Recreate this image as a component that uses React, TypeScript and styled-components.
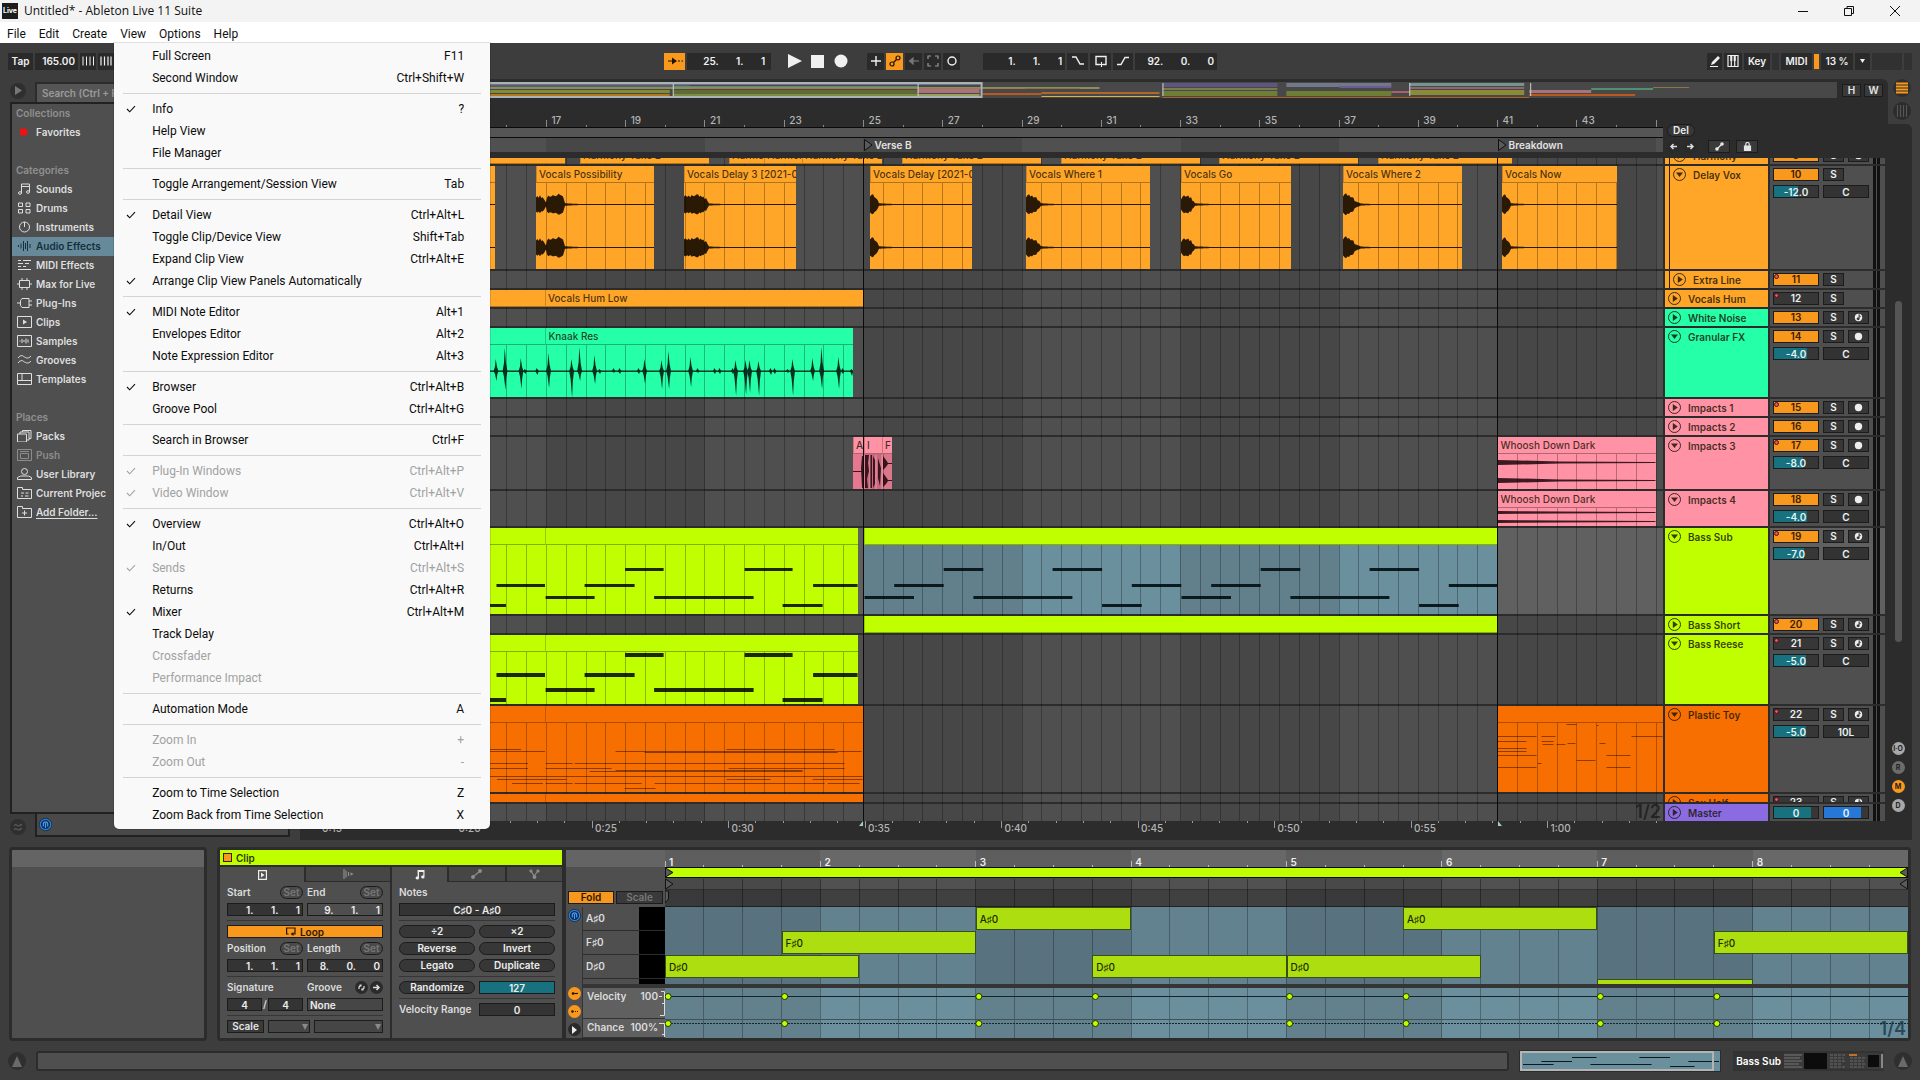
import React from "react";
import styled, { createGlobalStyle, css } from "styled-components";

const c = {
  chrome: "#3d3d3d",
  well: "#2c2c2c",
  panel: "#4f4f4f",
  field: "#2a2a2a",
  line: "#1c1c1c",
  text: "#dcdcdc",
  dim: "#8f8f8f",
  orange: "#ffa629",
  on: "#f8981d",
  lime: "#bfff00",
  note: "#addf10",
  mint: "#24ffa8",
  pink: "#ff92a5",
  toy: "#f76f00",
  purple: "#8a6be2",
  teal: "#17717f",
  steel: "#6a8f9d",
};

const Global = createGlobalStyle`
  *, *::before, *::after { box-sizing: border-box; }
  body { margin: 0; background: ${c.chrome}; }
  button, input, select { font: inherit; color: inherit; margin: 0; padding: 0; border: 0; border-radius: 0; background: none; }
  ul { list-style: none; margin: 0; padding: 0; }
  h2 { margin: 0; font: inherit; }
  svg { display: block; }
`;

const Page = styled.div`
  min-height: 100vh;
  display: flex;
  flex-direction: column;
  background: ${c.chrome};
  color: ${c.text};
  font: 500 10px/14px Inter, "Liberation Sans", sans-serif;
`;

/* ---------- window chrome ---------- */

const TitleBar = styled.header`
  display: flex;
  align-items: center;
  height: 22px;
  padding: 0 17px 0 2px;
  gap: 6px;
  background: #f3f3f3;
  color: #111;
  font: 400 12px/20px "Open Sans", "Noto Sans", sans-serif;
`;
const AppBadge = styled.span`
  display: grid;
  place-items: center;
  width: 16px;
  height: 16px;
  background: #1d1d1d;
  color: #fff;
  font: 700 7px/8px Inter, sans-serif;
`;
const WindowButtons = styled.div`
  display: flex;
  gap: 30px;
  margin-left: auto;
`;
const WinButton = styled.button`
  width: 16px;
  height: 16px;
  display: grid;
  place-items: center;
`;
const MenuBar = styled.nav`
  display: flex;
  height: 21px;
  padding-left: 1px;
  background: #fff;
  color: #111;
  font: 400 12px/22px Roboto, "Noto Sans", sans-serif;
`;
const MenuSlot = styled.div`
  position: relative;
`;
const MenuTitle = styled.button`
  padding: 1px 7px 0 6px !important;
  height: 21px;
`;
const Popup = styled.div`
  position: absolute;
  z-index: 20;
  top: 21px;
  left: 0;
  width: 376px;
  padding: 2px 0 3px;
  background: #f9f9f9;
  border-radius: 0 0 5px 5px;
  box-shadow: 0 0 0 1px rgba(0, 0, 0, 0.12);
`;
const MenuRow = styled.button<{ $off?: boolean }>`
  display: grid;
  grid-template-columns: 38px 1fr auto;
  align-items: center;
  width: 100%;
  height: 22px;
  padding: 0 26px 0 0 !important;
  line-height: 22px;
  text-align: left;
  color: ${(p) => (p.$off ? "#a2a2a2" : "#0c0c0c")} !important;
  > svg { margin-left: 12px; }
`;
const MenuLine = styled.hr`
  margin: 4px 9px;
  border: 0;
  height: 1px;
  background: #d4d4d4;
`;

type Entry = [string, string?, string?] | null;
const viewMenu: Entry[] = [
  ["Full Screen", "F11"], ["Second Window", "Ctrl+Shift+W"], null,
  ["Info", "?", "c"], ["Help View"], ["File Manager"], null,
  ["Toggle Arrangement/Session View", "Tab"], null,
  ["Detail View", "Ctrl+Alt+L", "c"], ["Toggle Clip/Device View", "Shift+Tab"],
  ["Expand Clip View", "Ctrl+Alt+E"], ["Arrange Clip View Panels Automatically", "", "c"], null,
  ["MIDI Note Editor", "Alt+1", "c"], ["Envelopes Editor", "Alt+2"], ["Note Expression Editor", "Alt+3"], null,
  ["Browser", "Ctrl+Alt+B", "c"], ["Groove Pool", "Ctrl+Alt+G"], null,
  ["Search in Browser", "Ctrl+F"], null,
  ["Plug-In Windows", "Ctrl+Alt+P", "cd"], ["Video Window", "Ctrl+Alt+V", "cd"], null,
  ["Overview", "Ctrl+Alt+O", "c"], ["In/Out", "Ctrl+Alt+I"], ["Sends", "Ctrl+Alt+S", "cd"],
  ["Returns", "Ctrl+Alt+R"], ["Mixer", "Ctrl+Alt+M", "c"], ["Track Delay"],
  ["Crossfader", "", "d"], ["Performance Impact", "", "d"], null,
  ["Automation Mode", "A"], null,
  ["Zoom In", "+", "d"], ["Zoom Out", "-", "d"], null,
  ["Zoom to Time Selection", "Z"], ["Zoom Back from Time Selection", "X"],
];

function ViewMenu() {
  return (
    <Popup role="menu" aria-label="View">
      {viewMenu.map((e, i) =>
        e === null ? (
          <MenuLine key={i} />
        ) : (
          <MenuRow key={i} role="menuitem" $off={e[2]?.includes("d")}>
            {e[2]?.includes("c") ? (
              <svg width="10" height="8" viewBox="0 0 10 8" fill="none" stroke="currentColor" strokeWidth="1.1">
                <path d="M1 4l2.7 2.8L9 1.2" />
              </svg>
            ) : (
              <span />
            )}
            <span>{e[0]}</span>
            <span>{e[1]}</span>
          </MenuRow>
        )
      )}
    </Popup>
  );
}

/* ---------- transport ---------- */

const Transport = styled.div`
  display: grid;
  grid-template-columns: 17fr auto 18fr;
  align-items: center;
  height: 36px;
  padding: 0 8px;
`;
const Group = styled.div<{ $end?: boolean; $gap?: number; $pl?: number; $pr?: number }>`
  display: flex;
  align-items: center;
  gap: ${(p) => p.$gap ?? 2}px;
  padding: 0 ${(p) => p.$pr ?? 0}px 0 ${(p) => p.$pl ?? 0}px;
  justify-content: ${(p) => (p.$end ? "flex-end" : "flex-start")};
`;
const Tool = styled.button<{ $w?: number; $on?: boolean; $bare?: boolean }>`
  display: grid;
  place-items: center;
  width: ${(p) => p.$w ?? 17}px;
  height: 17px;
  white-space: nowrap;
  background: ${(p) => (p.$bare ? "none" : p.$on ? c.on : c.field)} !important;
  color: ${(p) => (p.$on ? "#1d1200" : "#f0f0f0")} !important;
  font-weight: 600 !important;
`;
const Readout = styled.input<{ $w: number; $near?: boolean }>`
  width: ${(p) => p.$w}px;
  height: 17px;
  padding-right: ${(p) => (p.$near ? 3 : 6)}px !important;
  background: ${c.field} !important;
  color: #f0f0f0 !important;
  font-weight: 600 !important;
  text-align: right;
`;
const CpuBar = styled.span`
  width: 5px;
  height: 15px;
  background: ${c.on};
`;
const Lamp = styled.span<{ $w: number }>`
  width: ${(p) => p.$w}px;
  height: 17px;
  background: #313131;
`;

const S = ({ w = 12, h = 12, children, fill = false, sw = 1.2 }: any) => (
  <svg width={w} height={h} viewBox={`0 0 ${w} ${h}`} fill={fill ? "currentColor" : "none"} stroke={fill ? "none" : "currentColor"} strokeWidth={sw}>
    {children}
  </svg>
);

function TransportBar() {
  return (
    <Transport>
      <Group>
        <Tool $w={25}>Tap</Tool>
        <Readout $w={43} $near aria-label="Tempo" defaultValue="165.00" />
        <Tool $w={16} aria-label="Nudge down"><S><path d="M1 1.500v9M4.500 1.500v9M8 1.500v9M11.500 1.500v9" strokeWidth="1" /></S></Tool>
        <Tool $w={16} aria-label="Nudge up"><S><path d="M1 1.500v9M4.500 1.500v9M8 1.500v9M11 1.500v9" /></S></Tool>
      </Group>
      <Group>
        <Tool $w={21} $on aria-label="Follow"><S w={16}><path d="M1 6h6M11 6h2M14.500 6h1.500" /><path d="M5 2.500L10 6 5 9.500z" fill="currentColor" stroke="none" /></S></Tool>
        <Readout $w={84} aria-label="Arrangement position" defaultValue="25.       1.       1" />
        <Group $gap={9} $pl={15} $pr={17}>
          <Tool $bare $w={14} aria-label="Play"><S w={14} h={16} fill><path d="M0 1l14 7-14 7z" /></S></Tool>
          <Tool $bare $w={14} aria-label="Stop"><S w={14} h={14} fill><path d="M0 1h13v13H0z" /></S></Tool>
          <Tool $bare $w={14} aria-label="Record"><S w={14} h={14} fill><circle cx="7" cy="7" r="6.500" /></S></Tool>
        </Group>
        <Tool aria-label="Overdub"><S><path d="M6 1v10M1 6h10" strokeWidth="1.400" /></S></Tool>
        <Tool $on aria-label="Automation arm"><S><circle cx="3" cy="9" r="2" /><circle cx="9" cy="3" r="2" /><path d="M4.500 7.500l3-3" /></S></Tool>
        <Tool aria-label="Re-enable automation"><S><g stroke="#777" fill="#777"><path d="M3 6h8" /><path d="M5 3v6L1.500 6z" /></g></S></Tool>
        <Tool aria-label="Capture MIDI"><S><path stroke="#999" d="M1 4V1h3M8 1h3v3M11 8v3H8M4 11H1V8" /></S></Tool>
        <Tool aria-label="Session record"><S><circle cx="6" cy="6" r="4" strokeWidth="1.400" /></S></Tool>
        <Group $pl={21}><Readout $w={82} $near aria-label="Loop start" defaultValue="1.       1.       1" /></Group>
        <Tool $w={21} aria-label="Punch in"><S w={14}><path d="M1 2h4l4 7h4" strokeWidth="1.400" /></S></Tool>
        <Tool $w={21} aria-label="Loop"><S w={12}><path d="M5 9.500H1v-8h10v8H8" strokeWidth="1.400" /><path d="M6.500 7v5M4.500 9.500h4" /></S></Tool>
        <Tool $w={20} aria-label="Punch out"><S w={14}><path d="M1 9.500h4l4-7h4" strokeWidth="1.400" /></S></Tool>
        <Readout $w={82} $near aria-label="Loop length" defaultValue="92.       0.       0" />
      </Group>
      <Group $end>
        <Tool $w={15} aria-label="Draw mode"><S fill><path d="M3 7l6-6 2 2-6 6-3 1zM1 11h8v1H1z" /></S></Tool>
        <Tool $w={18} aria-label="Computer MIDI keyboard"><S><path d="M1 .5h10v11H1zM4.300 1v10M7.700 1v10" /><path d="M3.300 0h2v6h-2zM6.700 0h2v6h-2z" fill="currentColor" stroke="none" /></S></Tool>
        <Tool $w={26}>Key</Tool>
        <Lamp $w={7} />
        <Tool $w={31}>MIDI</Tool>
        <CpuBar />
        <Tool $w={32}>13 %</Tool>
        <Tool $w={15} aria-label="CPU meter options"><S w={5} h={4} fill><path d="M0 0h5L2.500 4z" /></S></Tool>
        <Lamp $w={30} />
        <Lamp $w={8} />
      </Group>
    </Transport>
  );
}

/* ---------- browser ---------- */

const Workspace = styled.main`
  display: grid;
  grid-template-columns: 290px minmax(0, 1fr) 24px;
  padding-right: 8px;
`;
const Browser = styled.aside`
  display: grid;
  grid-template-columns: 25px 1fr;
  grid-template-rows: 23px minmax(0, 1fr) 26px;
  padding-left: 10px;
`;
const Round = styled.button<{ $bg?: string; $s?: number }>`
  display: grid;
  place-items: center;
  width: ${(p) => p.$s ?? 13}px;
  height: ${(p) => p.$s ?? 13}px;
  flex: none;
  border-radius: 50% !important;
  background: ${(p) => p.$bg ?? c.field} !important;
  color: ${c.text} !important;
  font: 700 7px/8px Inter, sans-serif !important;
`;
const Corner = styled.div`
  display: grid;
  place-items: center start;
`;
const Search = styled.input`
  align-self: stretch;
  margin-top: 3px !important;
  padding: 0 5px !important;
  background: #555 !important;
  border: 2px solid ${c.well} !important;
  border-bottom: 0 !important;
  font-weight: 600 !important;
  &::placeholder { color: #9b9b9b; opacity: 1; }
`;
const Places = styled.div`
  grid-column: 1 / -1;
  border: 2px solid #212121;
  background: ${c.panel};
  font-weight: 600;
`;
const SideHead = styled.h2`
  height: 19px;
  padding-left: 4px;
  line-height: 18px;
  color: ${c.dim};
  ul + & { margin-top: 19px; }
`;
const SideButton = styled.button<{ $sel?: boolean; $off?: boolean; $link?: boolean }>`
  display: flex;
  align-items: center;
  gap: 4px;
  width: 100%;
  height: 19px;
  padding: 0 5px 1px !important;
  text-align: left;
  font-weight: 600 !important;
  white-space: nowrap;
  color: ${(p) => (p.$sel ? "#15303c" : p.$off ? "#8c8c8c" : "#dedede")} !important;
  background: ${(p) => (p.$sel ? "#668a9a" : "none")} !important;
  text-decoration: ${(p) => (p.$link ? "underline" : "none")};
  text-underline-offset: 2px;
`;
const Preview = styled.div`
  display: flex;
  align-items: center;
  padding: 0 2px;
  margin-bottom: 3px;
  border: 2px solid #212121;
  border-top: 0;
  background: #494949;
`;

const side: Record<string, React.ReactNode> = {
  Favorites: <rect x="3" y="2.500" width="7" height="7" rx="1" fill="#f21010" stroke="none" />,
  Sounds: <path d="M4.500 10V1h8v8M4.500 3.500h8M4.500 10a1.500 1.300 0 1 1-3 0 1.500 1.300 0 0 1 3 0M12.500 9a1.500 1.300 0 1 1-3 0 1.500 1.300 0 0 1 3 0" />,
  Drums: <path d="M1.500 1h4v3.500h-4zM9 1h4v3.500H9zM1.500 7.500h4V11h-4zM9 7.500h4V11H9z" />,
  Instruments: <><circle cx="7.500" cy="6" r="5" /><path d="M7.500 1v5" /></>,
  "Audio Effects": <path d="M1.500 5v2M4 3.500v5M6.500 1v10M8.500 3v6M10.500 1v10M13 4v4" />,
  "MIDI Effects": <path d="M1 1.500h3M6 1.500h8M1 4.500h5M8 4.500h4M1 7.500h3M6 7.500h3M1 10.500h13" />,
  "Max for Live": <path d="M2.500 2.500h10v7h-10zM5 0v2.500M10 0v2.500M5 9.500V12M10 9.500V12M0 6h2.500M12.500 6H15" />,
  "Plug-Ins": <path d="M5 1.500h7v9H5L3.500 8.500v-5zM0 6h3.500M12 4h3M12 8h3" />,
  Clips: <><path d="M.5.5h14v11H.5z" /><path d="M6 3.500L10 6 6 8.500z" fill="currentColor" stroke="none" /></>,
  Samples: <><path d="M.5.5h14v11H.5z" /><path d="M3 5.500v1M5 4v4M7 5v2M9 3.500v5M11 4.500v3" /></>,
  Grooves: <path d="M1 4c3-4 5-2 6.500-1s4 2 6.500-1M1 9c3-4 5-2 6.500-1s4 2 6.500-1" />,
  Templates: <path d="M.5.5h14v11H.5zM5 .5v7M.5 7.500h14" />,
  Packs: <path d="M.5 4h9v8h-9zM3 4V2h9v8H9.500M5.500 2V.5h8.500v8H12" />,
  Push: <path d="M.5.5h14v11H.5zM3 2.500h9M3.500 4.500h8v5h-8z" />,
  "User Library": <><circle cx="7.500" cy="3.500" r="3" /><path d="M.5 11.500V9.500l3-1.500h8l3 1.500v2z" /></>,
  "Current Projec": <path d="M.5 11.500V.5h5v2h9v9zM4 6h3M8.500 6h3M4 9h2M8 9h3.500" />,
  "Add Folder...": <path d="M.5 11.500V.5h5v2h9v9zM7.500 4.500v5M5 7h5" />,
};

function SideList({ title, items }: { title: string; items: string[] }) {
  return (
    <>
      <SideHead>{title}</SideHead>
      <ul>
        {items.map((n) => (
          <li key={n}>
            <SideButton $sel={n === "Audio Effects"} $off={n === "Push"} $link={n === "Add Folder..."}>
              <S w={15} h={12} sw={1}>{side[n]}</S>
              {n}
            </SideButton>
          </li>
        ))}
      </ul>
    </>
  );
}

const Phones = () => (
  <Round $bg="#0c2c52" aria-label="Preview">
    <S w={13} h={13}><circle cx="6.500" cy="6.500" r="5.200" stroke="#2f83d8" strokeWidth="1.200" /><path d="M4.300 8.500V6a2.200 2.200 0 0 1 4.400 0v2.500M6.500 5v5" stroke="#4a9bf0" /></S>
  </Round>
);

function BrowserPane() {
  return (
    <Browser>
      <Corner><Round $s={16} $bg="#2f2f2f" aria-label="Hide browser"><S w={9} h={9} fill><path d="M1 0l7 4.500L1 9z" fill="#777" /></S></Round></Corner>
      <Search aria-label="Search" placeholder="Search (Ctrl + F)" />
      <Places>
        <SideList title="Collections" items={["Favorites"]} />
        <SideList title="Categories" items={["Sounds", "Drums", "Instruments", "Audio Effects", "MIDI Effects", "Max for Live", "Plug-Ins", "Clips", "Samples", "Grooves", "Templates"]} />
        <SideList title="Places" items={["Packs", "Push", "User Library", "Current Projec", "Add Folder..."]} />
      </Places>
      <Corner><Round $s={16} $bg="#2f2f2f" aria-label="Groove pool"><S w={10} h={8}><path d="M1 3c2-3 3 0 4 0s2 0 4-2M1 7c2-3 3 0 4 0s2 0 4-2" stroke="#5a5a5a" /></S></Round></Corner>
      <Preview><Phones /></Preview>
    </Browser>
  );
}

/* ---------- arrangement ---------- */

const X0 = 303;
const SPAN = 1360;
const BAR = 39.63;
const at = (x: number) => `${((x - X0) / SPAN) * 100}%`;
const wide = (w: number) => `${(w / SPAN) * 100}%`;
const barX = (b: number) => 863.5 + (b - 25) * BAR;

const shades = (dark: string, light: string) => {
  const out: string[] = [];
  for (let b = 9; b < 46; b += 4) {
    const col = ((b - 25) / 4) % 2 === 0 ? dark : light;
    out.push(`${col} ${at(barX(b))} ${at(barX(b + 4))}`);
  }
  return `linear-gradient(90deg, ${out.join(", ")})`;
};

const Arrange = styled.section`
  display: flex;
  flex-direction: column;
  margin-left: 10px;
  padding: 3px 3px 0;
  background: ${c.well};
  border-radius: 6px 6px 0 0;
`;
const OverviewRow = styled.div`
  display: flex;
  height: 16px;
  gap: 3px;
  padding-right: 2px;
`;
const Overview = styled.div`
  flex: 1;
  min-width: 0;
  margin-right: 2px;
  background: #484848;
  > svg { width: 100%; height: 16px; }
`;
const Tiny = styled.button<{ $w?: number; $on?: boolean; $dim?: boolean }>`
  display: grid;
  place-items: center;
  width: ${(p) => p.$w ?? 19}px;
  height: 13px;
  line-height: 11px !important;
  background: ${(p) => (p.$on ? c.on : "#3a3a3a")} !important;
  border: 1px solid ${c.line} !important;
  color: ${(p) => (p.$on ? "#2a1700" : p.$dim ? "#777" : "#e4e4e4")} !important;
  font-weight: 600 !important;
`;
const CornerTools = styled.div`
  display: flex;
  gap: 3px;
  padding-top: 2px;
`;
const Head = styled.div`
  display: grid;
  grid-template-columns: minmax(0, 1fr) 220px;
  column-gap: 2px;
  height: 60px;
`;
const Ruler = styled.div`
  position: relative;
  height: 29px;
  > svg { width: 100%; height: 29px; }
`;
const Scrub = styled.div`
  height: 11px;
  background: #555;
  border: solid #0b0b0b;
  border-width: 1px 0;
`;
const Locators = styled.div`
  position: relative;
  height: 14px;
  background: ${shades("#474747", "#505050")};
`;
const RulerLabel = styled.span<{ $x: number }>`
  position: absolute;
  top: 15px;
  left: ${(p) => at(p.$x)};
  padding-left: 5px;
  color: #b4b4b4;
`;
const Locator = styled.span<{ $x: number }>`
  position: absolute;
  top: 0;
  left: ${(p) => at(p.$x)};
  display: flex;
  align-items: center;
  gap: 2px;
  color: #e2e2e2;
  font-weight: 600;
`;
const HeadTools = styled.div`
  display: flex;
  flex-direction: column;
  justify-content: flex-end;
  padding: 0 2px 5px;
  gap: 3px;
`;
const Pill = styled.button<{ $w?: number; $flat?: boolean }>`
  width: ${(p) => (p.$w ? p.$w + "px" : "100%")};
  height: 13px;
  line-height: 11px !important;
  border-radius: 7px !important;
  border: 1px solid ${c.line} !important;
  background: ${(p) => (p.$flat ? "#4a4a4a" : "#373737")} !important;
  color: ${(p) => (p.$flat ? "#777" : "#ededed")} !important;
  font-weight: 600 !important;
`;

const Tracks = styled.div`
  position: relative;
  display: flex;
  flex-direction: column;
  gap: 2px;
`;
const Row = styled.div<{ $h: number; $end?: boolean }>`
  display: grid;
  grid-template-columns: minmax(0, 1fr) 103px 115px;
  column-gap: 2px;
  height: ${(p) => p.$h}px;
  overflow: hidden;
  > * { min-height: 17px; }
  align-content: ${(p) => (p.$end ? "end" : "stretch")};
`;
const Lane = styled.div<{ $sel?: boolean }>`
  position: relative;
  background: ${(p) => (p.$sel ? "#606060" : shades("#474747", "#4f4f4f"))};
`;
const GridLines = styled.svg`
  position: absolute;
  z-index: 1;
  top: 0;
  left: 0;
  width: calc(100% - 222px);
  height: 100%;
  pointer-events: none;
`;
const Cursors = styled(GridLines)`
  z-index: 3;
`;
const ClipBox = styled.div<{ $a: number; $b: number; $c: string }>`
  position: absolute;
  top: 0;
  bottom: 0;
  left: ${(p) => at(p.$a)};
  width: ${(p) => wide(p.$b - p.$a)};
  overflow: hidden;
  display: flex;
  flex-direction: column;
  background: ${(p) => p.$c};
`;
const ClipHead = styled.div<{ $c: string }>`
  position: relative;
  z-index: 2;
  flex: none;
  height: 17px;
  padding: 1px 2px;
  overflow: hidden;
  white-space: nowrap;
  color: rgba(35, 20, 5, 0.82);
  background: ${(p) => p.$c};
  border-left: 1px solid rgba(0, 0, 0, 0.2);
  border-bottom: 1px solid rgba(0, 0, 0, 0.3);
`;
const ClipBody = styled.svg`
  flex: 1;
  width: 100%;
  min-height: 0;
`;

type Clip = { a: number; b: number; color: string; name?: string; h?: number; art?: React.ReactNode; body?: string };

function ClipView({ a, b, color, name, h = 0, art, body }: Clip) {
  return (
    <ClipBox $a={a} $b={b} $c={body ?? color}>
      <ClipHead $c={color}>{name}</ClipHead>
      {h > 0 && (
        <ClipBody viewBox={`${a} 0 ${b - a} ${h}`} preserveAspectRatio="none">
          {art}
        </ClipBody>
      )}
    </ClipBox>
  );
}

const wobble = (i: number) => [0, 1.2, -0.8, 0.6, -1.3, 0.9, -0.3][i % 7];
const envelope = (x: number, cy: number, pts: number[][]) => {
  const top: string[] = [];
  const bot: string[] = [];
  for (let k = 0; k < pts.length - 1; k++) {
    const [x1, a1] = pts[k];
    const [x2, a2] = pts[k + 1];
    const n = Math.max(1, Math.round((x2 - x1) / 1.5));
    for (let i = 0; i < n; i++) {
      const t = i / n;
      const amp = a1 + (a2 - a1) * t;
      const w = amp > 4 ? wobble(i + k) : 0;
      top.push(`${x + x1 + (x2 - x1) * t},${cy - amp - w}`);
      bot.unshift(`${x + x1 + (x2 - x1) * t},${cy + amp + w * 0.7}`);
    }
  }
  return [...top, ...bot].join(" ");
};
const Stereo = ({ x, end, cys, pts }: { x: number; end: number; cys: number[]; pts: number[][] }) => (
  <g fill="#2a1a05">
    {cys.map((cy) => (
      <g key={cy}>
        <polygon points={envelope(x, cy, pts)} />
        <rect x={x} y={cy - 0.5} width={end - x} height="1" />
      </g>
    ))}
  </g>
);

const vox: [number, number, string, number[][]][] = [
  [303, 495, "Vocals Where", [[0, 2], [20, 0]]],
  [536, 654, "Vocals Possibility", [[0, 7], [4, 8], [8, 6], [10, 2], [11, 8], [18, 8], [24, 10], [27, 8], [29, 1.2], [44, 0.5], [60, 0]]],
  [684, 796, "Vocals Delay 3 [2021-0", [[0, 8], [14, 9], [18, 8], [22, 6], [25, 1], [40, 0.5], [60, 0]]],
  [870, 972, "Vocals Delay [2021-0", [[0, 8], [3, 9], [6, 7], [9, 1.2], [24, 0.5], [40, 0]]],
  [1026, 1150, "Vocals Where 1", [[0, 7], [3, 9], [9, 8], [13, 4], [15, 1.2], [30, 0.5], [50, 0]]],
  [1181, 1291, "Vocals Go", [[0, 5], [3, 8], [6, 9], [10, 7], [14, 1.2], [30, 0.5], [50, 0]]],
  [1343, 1462, "Vocals Where 2", [[0, 8], [3, 10], [9, 8], [13, 3], [18, 1], [30, 0.5], [50, 0]]],
  [1502, 1617, "Vocals Now", [[0, 7], [3, 9], [6, 7], [9, 1.2], [24, 0.5], [30, 0]]],
];

const harmony: [number, number][] = [
  [303, 565], [580, 709], [729, 764], [764, 802], [802, 882], [902, 1041], [1061, 1200], [1219, 1358], [1378, 1512],
];

const spikes: number[][] = [
  [496, 12, 10], [505, 23, 19], [521, 13, 18], [525, 2, 3], [537, 3, 4],
  [549, 18, 17], [572, 12, 27], [580, 24, 10], [595, 16, 13], [600, 2, 3], [614, 3, 2], [620, 3, 3],
  [639, 3, 3], [645, 12, 13], [662, 11, 18], [669, 20, 18], [691, 14, 16], [698, 3, 2], [715, 3, 3], [720, 3, 3],
  [733, 3, 3], [736, 11, 25], [746, 11, 24], [750, 11, 22], [759, 10, 25], [771, 3, 4], [775, 3, 3], [788, 2, 2],
  [793, 12, 25], [813, 13, 10], [822, 24, 18], [839, 14, 18], [843, 3, 3], [852, 2, 5],
];
const Granular = () => (
  <g fill="#06301f">
    <rect x="303" y="25.500" width="550" height="1.400" />
    {spikes.map(([x, u, d], i) => {
      const w = u < 5 ? 2 : 2.4;
      return <polygon key={i} points={`${x - w},26 ${x - 1},${26 - u * 0.35} ${x - 0.3},${26 - u} ${x + 1},${26 - u * 0.35} ${x + w},26 ${x + 1.2},${26 + d * 0.4} ${x + 0.5},${26 + d} ${x - 1},${26 + d * 0.3}`} />;
    })}
  </g>
);

const riff: [number, number, number][] = [
  [480, 506, 3], [496.5, 545, 1], [546, 595, 2], [585, 635, 1], [625.5, 664, 0], [654.5, 754, 2],
  [745, 793, 0], [783, 823, 3], [813.5, 858, 1],
];
const Riff = ({ ys, t }: { ys: number[]; t: number }) => (
  <g fill="#1d2800">{riff.map(([a, b, k], i) => <rect key={i} x={a} y={ys[k]} width={b - a} height={t} />)}</g>
);
const editorNotes: [number, number, number][] = [
  [0, 1.25, 2], [0.75, 2, 1], [2, 3, 0], [2.75, 4, 2], [4, 5.25, 2], [4.75, 6, 0], [6, 7, 3], [6.75, 8, 1],
];
const SelRiff = () => (
  <g fill="#0c1a20">
    {[864, 1181].flatMap((x) =>
      editorNotes.map(([a, b, k]) => <rect key={`${x}-${a}`} x={x + a * 39.6} y={[23, 39, 51, 59][k]} width={(b - a) * 39.6} height="3" />)
    )}
  </g>
);

const toyA: number[][] = [
  [303, 521, 26], [480, 545, 28], [616, 862, 28], [645, 838, 29], [727, 835, 26], [303, 528, 40], [546, 573, 40], [575, 610, 40], [608, 845, 40],
  [303, 528, 45], [546, 612, 45], [729, 845, 45], [590, 803, 48], [616, 803, 47], [480, 863, 53], [497, 567, 56], [727, 771, 56], [813, 863, 56],
  [512, 543, 60], [546, 573, 60], [575, 642, 60], [655, 825, 60], [828, 860, 60], [625, 656, 65], [497, 545, 69], [585, 622, 69], [813, 863, 69],
  [480, 572, 73], [585, 618, 73], [654, 818, 73],
];
const toyB: number[][] = [
  [1567, 1577, 1], [1597, 1599, 2], [1498, 1537, 13], [1542, 1556, 13], [1632, 1663, 13], [1498, 1527, 18], [1542, 1554, 18], [1543, 1554, 21],
  [1557, 1566, 21], [1568, 1576, 20], [1600, 1606, 20], [1498, 1527, 25], [1498, 1527, 28], [1498, 1537, 32], [1607, 1631, 32], [1538, 1542, 40],
  [1577, 1596, 37], [1498, 1537, 44], [1607, 1631, 44],
];
const Strokes = ({ d }: { d: number[][] }) => (
  <g fill="#8d3c00">{d.map(([a, b, y], i) => <rect key={i} x={a} y={y} width={b - a} height="1" />)}</g>
);

const Whoosh = ({ cys, amp }: { cys: number[]; amp: number }) => (
  <g fill="#3c1a22">
    {cys.map((y) => (
      <path key={y} d={`M1498 ${y - amp}L1520 ${y - amp * 0.8}L1560 ${y - 1}L1656 ${y - 0.5}V${y + 0.6}L1560 ${y + 1}L1520 ${y + amp * 0.8}L1498 ${y + amp}z`} />
    ))}
  </g>
);
const Hits = () => (
  <g fill="#3a151d">
    <rect x="853" y="17" width="9" height="1" />
    <path d="M861 14l1-12h2v32h-2zM865 1h4l-1 8 1 8-2 8 1 9h-3zM870 1h2v33h-2zM873 2l2 4v24l-2 4zM878 4l3 10-1 18-2-8z" />
    <path d="M883 2l3 4 2 3h4v1h-4l-2 3-3 3zM883 19l3 4 2 3h4v1h-4l-2 3-3 3z" />
    <path d="M864 1v34M870 1v34M876 1v34M882 1v34" stroke="#ffb9c6" strokeWidth=".6" />
  </g>
);

type Track = {
  name: string; h: number; color: string; n?: string; on?: boolean; auto?: boolean; vol?: string; fill?: number; pan?: string;
  rec?: "audio" | "midi"; open?: boolean; child?: boolean; sel?: boolean; cut?: boolean; master?: boolean; clips?: Clip[];
};
const orange = c.orange;
const tracks: Track[] = [
  { name: "Harmony", h: 6, color: orange, n: "9", on: true, rec: "audio", child: true, cut: true,
    clips: harmony.map(([a, b]) => ({ a, b, color: orange, name: "Harmony Take 2" })) },
  { name: "Delay Vox", h: 103, color: orange, n: "10", on: true, vol: "-12.0", fill: 54, pan: "C", open: true, child: true,
    clips: vox.map(([a, b, name, pts]) => ({ a, b, color: orange, name, h: 86, art: <Stereo x={a} end={b} cys={[21.5, 64.5]} pts={pts} /> })) },
  { name: "Extra Line", h: 17, color: orange, n: "11", on: true, auto: true, child: true },
  { name: "Vocals Hum", h: 17, color: orange, n: "12", auto: true,
    clips: [{ a: 303, b: 545, color: orange }, { a: 545, b: 863, color: orange, name: "Vocals Hum Low" }] },
  { name: "White Noise", h: 17, color: c.mint, n: "13", on: true, rec: "midi" },
  { name: "Granular FX", h: 69, color: c.mint, n: "14", on: true, rec: "audio", vol: "-4.0", fill: 74, pan: "C", open: true,
    clips: [{ a: 303, b: 545.4, color: c.mint, h: 52, art: <Granular /> }, { a: 545.4, b: 853, color: c.mint, name: "Knaak Res", h: 52, art: <Granular /> }] },
  { name: "Impacts 1", h: 17, color: c.pink, n: "15", on: true, auto: true, rec: "audio" },
  { name: "Impacts 2", h: 17, color: c.pink, n: "16", on: true, rec: "audio" },
  { name: "Impacts 3", h: 52, color: c.pink, n: "17", on: true, auto: true, rec: "audio", vol: "-8.0", fill: 66, pan: "C", open: true,
    clips: [{ a: 853, b: 864, color: c.pink, name: "A", h: 35, art: <Hits />, body: "#e5788e" }, { a: 864, b: 882, color: c.pink, name: "I", h: 35, art: <Hits />, body: "#c9687c" },
      { a: 882, b: 892, color: c.pink, name: "F", h: 35, art: <Hits />, body: "#d9788a" },
      { a: 1497.5, b: 1656, color: c.pink, name: "Whoosh Down Dark", h: 35, art: <Whoosh cys={[8.5, 26.5]} amp={2.5} /> }] },
  { name: "Impacts 4", h: 35, color: c.pink, n: "18", on: true, rec: "audio", vol: "-4.0", fill: 74, pan: "C", open: true,
    clips: [{ a: 1497.5, b: 1656, color: c.pink, name: "Whoosh Down Dark", h: 18, art: <Whoosh cys={[4.5, 13.5]} amp={1.5} /> }] },
  { name: "Bass Sub", h: 86, color: c.lime, n: "19", on: true, auto: true, rec: "midi", vol: "-7.0", fill: 68, pan: "C", open: true, sel: true,
    clips: [{ a: 303, b: 545.4, color: c.lime, h: 69, art: <Riff ys={[23, 39, 51, 59]} t={3} /> }, { a: 545.4, b: 858, color: c.lime, h: 69, art: <Riff ys={[23, 39, 51, 59]} t={3} /> },
      { a: 863.5, b: 1497.5, color: c.lime, body: "repeating-linear-gradient(90deg, #62808c 0 25%, #6a8f9d 25% 50%)", h: 69, art: <SelRiff /> }] },
  { name: "Bass Short", h: 17, color: c.lime, n: "20", on: true, auto: true, rec: "midi", clips: [{ a: 863.5, b: 1497.5, color: c.lime }] },
  { name: "Bass Reese", h: 69, color: c.lime, n: "21", auto: true, rec: "midi", vol: "-5.0", fill: 72, pan: "C", open: true,
    clips: [{ a: 303, b: 545.4, color: c.lime, h: 52, art: <Riff ys={[1, 21, 36, 46]} t={4} /> }, { a: 545.4, b: 858, color: c.lime, h: 52, art: <Riff ys={[1, 21, 36, 46]} t={4} /> }] },
  { name: "Plastic Toy", h: 86, color: c.toy, n: "22", auto: true, rec: "midi", vol: "-5.0", fill: 72, pan: "10L", open: true,
    clips: [{ a: 303, b: 545.4, color: c.toy, h: 69, art: <Strokes d={toyA} /> }, { a: 545.4, b: 863, color: c.toy, h: 69, art: <Strokes d={toyA} /> },
      { a: 1497.5, b: 1663, color: c.toy, h: 69, art: <Strokes d={toyB} /> }] },
  { name: "Sax Half", h: 8, color: c.toy, n: "23", auto: true, rec: "midi", clips: [{ a: 303, b: 545.4, color: c.toy }, { a: 545.4, b: 863, color: c.toy }] },
  { name: "Master", h: 17, color: c.purple, master: true, vol: "0", fill: 83, pan: "0" },
];

const TrackHead = styled.div<{ $c: string; $child?: boolean }>`
  display: flex;
  align-items: flex-start;
  gap: 7px;
  padding: 2px 3px;
  line-height: 14px;
  background: ${(p) => p.$c};
  color: rgba(30, 24, 8, 0.85);
  font-weight: 600;
  white-space: nowrap;
  ${(p) => p.$child && css`
    margin-left: 5px;
    box-shadow: -1px 0 0 #2c1d05, -5px 0 0 ${p.$c};
  `}
`;
const Fold = styled.button`
  flex: none;
  width: 13px;
  height: 13px;
`;
const Mixer = styled.div<{ $sel?: boolean }>`
  display: grid;
  grid-template-columns: 46px 21px 21px 7px;
  grid-template-rows: 13px 13px 1fr;
  gap: 4px;
  padding: 2px 3px 0;
  background: ${(p) => (p.$sel ? "#606060" : c.panel)};
`;
const Cell = styled.button<{ $on?: boolean }>`
  position: relative;
  display: grid;
  place-items: center;
  height: 13px;
  line-height: 11px !important;
  border: 1px solid ${c.line} !important;
  background: ${(p) => (p.$on ? c.on : "#373737")} !important;
  color: ${(p) => (p.$on ? "#3a2000" : "#eee")} !important;
  font-weight: 600 !important;
`;
const Dot = styled.i`
  position: absolute;
  top: 0;
  left: 0;
  width: 5px;
  height: 5px;
  border: 1px solid #4a1010;
  border-radius: 50%;
  background: #e8525e;
`;
const Value = styled.input<{ $fill?: number; $tint?: string; $span?: boolean }>`
  width: 100%;
  height: 13px;
  border: 1px solid ${c.line} !important;
  background: ${(p) => (p.$fill ? `linear-gradient(90deg, ${p.$tint ?? c.teal} ${p.$fill}%, #373737 ${p.$fill}%)` : "#333")} !important;
  color: #e6f2f2 !important;
  text-align: center;
  font-weight: 600 !important;
  line-height: 11px !important;
  grid-column: ${(p) => (p.$span ? "span 2" : "auto")};
`;
const Meter = styled.div`
  grid-column: 4;
  grid-row: 1 / -1;
  margin-top: -2px;
  background: linear-gradient(90deg, #111 3px, #4f4f4f 3px 4px, #111 4px);
`;
const Zoom = styled.span`
  position: absolute;
  right: 2px;
  bottom: 0;
  z-index: 4;
  color: rgba(12, 12, 12, 0.6);
  font: 600 18px/18px Inter, sans-serif;
`;
const Seconds = styled.div`
  position: relative;
  height: 19px;
  margin-right: 222px;
  > svg { width: 100%; height: 19px; }
`;
const SecLabel = styled(RulerLabel)`
  top: 0;
  padding-left: 3px;
`;

const FoldIcon = ({ open }: { open?: boolean }) => (
  <Fold aria-label={open ? "Fold track" : "Unfold track"}>
    <S w={13} h={13} sw={1}>
      <circle cx="6.500" cy="6.500" r="6" />
      <path d={open ? "M3 4.500h7L6.500 9z" : "M4.800 3l5 3.500-5 3.500z"} fill="currentColor" stroke="none" />
    </S>
  </Fold>
);

function TrackRow({ t }: { t: Track }) {
  return (
    <Row $h={t.h} $end={t.cut}>
      <Lane $sel={t.sel}>
        {t.clips?.map((k, i) => <ClipView key={i} {...k} />)}
        {t.master && <Zoom>1/2</Zoom>}
      </Lane>
      <TrackHead $c={t.color} $child={t.child}>
        <FoldIcon open={t.open} />
        <span>{t.name}</span>
      </TrackHead>
      <Mixer $sel={t.sel}>
        {t.master ? (
          <>
            <Value aria-label="Master volume" defaultValue="0" $fill={83} />
            <Value aria-label="Cue volume" defaultValue="0" $fill={84} $tint="#2678d8" $span />
          </>
        ) : (
          <>
            <Cell $on={t.on} aria-label={`Activate ${t.name}`}>{t.auto && <Dot />}{t.n}</Cell>
            <Cell aria-label="Solo">S</Cell>
            {t.rec ? (
              <Cell aria-label="Arm">
                <S w={9} h={9} fill>
                  <circle cx="4.500" cy="4.500" r="3.700" />
                  {t.rec === "midi" && <path d="M4.600 1.200h1v1.200l1.200 1-.2.800-1-.6v2.200a1.500 1.300 0 1 1-1-1.200z" fill="#333" />}
                </S>
              </Cell>
            ) : <span />}
            {t.vol && <Value aria-label="Volume" defaultValue={t.vol} $fill={t.fill} />}
            {t.pan && <Value aria-label="Pan" defaultValue={t.pan} $span />}
          </>
        )}
        <Meter />
      </Mixer>
    </Row>
  );
}

const Lines = ({ xs, strong }: { xs: string[]; strong?: boolean }) => (
  <>{xs.map((x) => <line key={x} x1={x} x2={x} y1="0" y2="100%" stroke={strong ? "#0b0b0b" : "rgba(0,0,0,.28)"} strokeWidth="1" shapeRendering="crispEdges" />)}</>
);
const halfBars = Array.from({ length: 70 }, (_, i) => barX(11 + i / 2)).filter((x) => x > X0 && x < X0 + SPAN);

const ov: [number, number, number, string, number][] = [
  [303, 983, 1, "#6d70a0", 2], [303, 690, 3, "#5a6060", 2], [303, 1100, 5, "#8a8f58", 2], [303, 670, 8, "#7f8c3c", 3], [303, 670, 12, "#b3791c", 3],
  [673, 918, 4, "#5f8a70", 1], [690, 1030, 6, "#a07a4a", 1], [673, 918, 8, "#5d6b3a", 4], [673, 918, 12, "#7d8c3e", 2], [800, 918, 15, "#a5622e", 1],
  [918, 980, 7, "#a8737c", 4], [918, 980, 12, "#98a060", 2], [983, 1042, 11, "#b85a1e", 2], [1026, 1080, 6, "#8a7448", 1], [1042, 1160, 10, "#b0672a", 2], [1042, 1160, 14, "#d3b34a", 1],
  [1163, 1278, 1, "#5f5680", 4], [1287, 1392, 1, "#717888", 4], [1340, 1392, 4, "#6b5c94", 2], [1163, 1278, 6, "#7e7a50", 2], [1163, 1278, 9, "#6f7e36", 5],
  [1287, 1392, 9, "#6f7e36", 5], [1163, 1530, 15, "#a8622a", 1], [1392, 1410, 9, "#a8626c", 2], [1410, 1525, 1, "#759490", 3], [1410, 1525, 5, "#8c6670", 2],
  [1410, 1525, 8, "#8a8a38", 5], [1530, 1592, 8, "#a8737c", 3], [1530, 1636, 12, "#b8591e", 2], [1592, 1654, 6, "#4f9070", 2], [1654, 1690, 5, "#8a7448", 1],
];

function Arrangement() {
  const secs = Array.from({ length: 50 }, (_, i) => 15 + i);
  return (
    <Arrange>
      <OverviewRow>
        <Overview>
          <svg viewBox="303 0 1535 16" preserveAspectRatio="none">
            {ov.map(([a, b, y, col, h], i) => <rect key={i} x={a} y={y} width={b - a} height={h} fill={col} />)}
            <path d="M673.500 2v12M918.500 2v12M1163.500 1v13M1410.500 1v13M1531.500 1v13" stroke="#d0d0d0" />
            <rect x="280" y="1" width="702" height="14" fill="none" stroke="#a9b3b6" strokeWidth="2" />
          </svg>
        </Overview>
        <CornerTools>
          <Tiny>H</Tiny>
          <Tiny>W</Tiny>
        </CornerTools>
      </OverviewRow>
      <Head>
        <div>
          <Ruler>
            <svg>
              {Array.from({ length: 36 }, (_, i) => 11 + i).map((b) => {
                const x = at(barX(b));
                return <line key={b} x1={x} x2={x} y1={b % 2 ? 22 : 27} y2="29" stroke="#8a8a8a" shapeRendering="crispEdges" />;
              })}
            </svg>
            {Array.from({ length: 17 }, (_, i) => 11 + 2 * i).map((b) => <RulerLabel key={b} $x={barX(b)}>{b}</RulerLabel>)}
          </Ruler>
          <Scrub />
          <Locators>
            {[[25, "Verse B"], [41, "Breakdown"]].map(([b, n]) => (
              <Locator key={n} $x={barX(b as number)}>
                <S w={9} h={12} sw={1}><path d="M.5.500L8 6 .5 11.500z" stroke="#111" fill="#5a5a5a" /></S>
                {n}
              </Locator>
            ))}
          </Locators>
        </div>
        <HeadTools>
          <Pill $w={28}>Del</Pill>
          <Group $gap={4}>
            <Round aria-label="Previous locator"><S w={9} h={9}><path d="M8 4.500H2M4.500 2L2 4.500 4.500 7" strokeWidth="1.500" /></S></Round>
            <Round aria-label="Next locator"><S w={9} h={9}><path d="M1 4.500h6M4.500 2L7 4.500 4.500 7" strokeWidth="1.500" /></S></Round>
            <Group $gap={6} $pl={7}>
              <Tiny $w={22} aria-label="Automation mode"><S w={9} h={9}><path d="M2 7l5-5" /><circle cx="2" cy="7" r="1.200" fill="currentColor" /><circle cx="7" cy="2" r="1.200" fill="currentColor" /></S></Tiny>
              <Tiny $w={22} aria-label="Lock envelopes"><S w={9} h={9}><path d="M1.500 4h6v4.500h-6z" fill="currentColor" /><path d="M2.800 4V2a1.700 1.500 0 0 1 3.400 0v2" /></S></Tiny>
            </Group>
          </Group>
        </HeadTools>
      </Head>
      <Tracks>
        {tracks.map((t) => <TrackRow key={t.name} t={t} />)}
        <GridLines><Lines xs={halfBars.map(at)} /></GridLines>
        <Cursors><Lines strong xs={[at(863.5), at(1497.5)]} /></Cursors>
      </Tracks>
      <Seconds>
        <svg>
          {secs.map((s) => {
            const x = at(865 + (s - 35) * 27.3);
            return <line key={s} x1={x} x2={x} y1="0" y2={s % 5 ? 2 : 7} stroke="#9a9a9a" shapeRendering="crispEdges" />;
          })}
          <svg x={at(859)} width="4" height="5"><path d="M4 0v5H0z" fill="#9fd0c8" /></svg>
          <svg x={at(1498)} width="4" height="5"><path d="M0 0v5h4z" fill="#9fd0c8" /></svg>
        </svg>
        {secs.filter((s) => s % 5 === 0 && s <= 60).map((s) => (
          <SecLabel key={s} $x={865 + (s - 35) * 27.3}>{`${Math.floor(s / 60)}:${String(s % 60).padStart(2, "0")}`}</SecLabel>
        ))}
      </Seconds>
    </Arrange>
  );
}

/* ---------- right rail ---------- */

const Rail = styled.aside`
  display: grid;
  grid-template-rows: 45px 1fr;
`;
const RailTop = styled.div`
  display: flex;
  flex-direction: column;
  align-items: center;
  padding-left: 4px;
  gap: 5px;
`;
const RailBody = styled.div`
  display: flex;
  flex-direction: column;
  align-items: center;
  padding: 177px 4px 28px 0;
  background: ${c.well};
  border-radius: 0 6px 0 0;
`;
const Thumb = styled.div`
  width: 7px;
  height: 341px;
  margin-bottom: auto;
  border-radius: 4px;
  background: #555;
`;
const RailDots = styled.div`
  display: flex;
  flex-direction: column;
  gap: 6px;
`;
const RailLetter = styled(Round)`
  color: #222 !important;
`;

function RightRail() {
  return (
    <Rail>
      <RailTop>
        <Round $s={18} $bg="#2f2f2f" aria-label="Arrangement view"><S w={12} h={12}><path d="M0 1.500h12M0 4.500h12M0 7.500h12M0 10.500h12" stroke={c.on} strokeWidth="1.800" /></S></Round>
        <Round $s={18} $bg="#2c2c2c" aria-label="Session view"><S w={12} h={12}><path d="M1.500 0v12M4.500 0v12M7.500 0v12M10.500 0v12" stroke="#555" /></S></Round>
      </RailTop>
      <RailBody>
        <Thumb />
        <RailDots>
          <RailLetter $bg="#a8a8a8">I·O</RailLetter>
          <RailLetter $bg="#6c6c6c">R</RailLetter>
          <RailLetter $bg={c.on}>M</RailLetter>
          <RailLetter $bg="#a8a8a8">D</RailLetter>
        </RailDots>
      </RailBody>
    </Rail>
  );
}

/* ---------- detail view ---------- */

const Detail = styled.section`
  display: grid;
  grid-template-columns: 198px minmax(0, 1fr);
  column-gap: 10px;
  margin: 7px 9px 0;
  height: 194px;
`;
const Well = styled.div`
  border: 3px solid ${c.well};
  border-radius: 4px;
  background: ${c.well};
`;
const InfoBox = styled(Well)`
  background: linear-gradient(#646464 17px, ${c.panel} 17px);
`;
const ClipWell = styled(Well)`
  display: grid;
  grid-template-columns: 342px minmax(0, 1fr);
  column-gap: 4px;
`;
const ClipPanel = styled.div`
  display: grid;
  grid-template-columns: 1fr 1fr;
  grid-template-rows: 15px 171px;
  gap: 2px;
`;
const ClipTitle = styled.h2`
  grid-column: 1 / -1;
  display: flex;
  align-items: center;
  gap: 4px;
  padding-left: 3px;
  background: ${c.lime};
  color: #2c3a00;
  font-weight: 600;
`;
const ClipSwatch = styled.button`
  width: 9px;
  height: 9px;
  border: 1px solid #3a2000 !important;
  background: ${c.on} !important;
`;
const Col = styled.div`
  display: flex;
  flex-direction: column;
  background: ${c.panel};
`;
const Tabs = styled.div`
  display: flex;
  gap: 2px;
  background: ${c.well};
`;
const Tab = styled.button<{ $on?: boolean }>`
  flex: 1;
  display: grid;
  place-items: center;
  height: 15px;
  background: ${(p) => (p.$on ? c.panel : "#464646")} !important;
  border-bottom: ${(p) => (p.$on ? "0" : `1px solid ${c.well}`)} !important;
  color: ${(p) => (p.$on ? "#eee" : "#8d8d8d")} !important;
`;
const Fields = styled.div`
  display: flex;
  flex-direction: column;
  gap: 4px;
  padding: 4px 7px 0;
  font-weight: 600;
`;
const Pair = styled.div<{ $cols?: string }>`
  display: grid;
  grid-template-columns: ${(p) => p.$cols ?? "76px 76px"};
  column-gap: 4px;
  align-items: center;
  height: 13px;
`;
const Caption = styled.div`
  display: flex;
  align-items: center;
  gap: 2px;
  line-height: 13px;
  white-space: nowrap;
  > :nth-child(2) { margin-left: auto !important; }
`;
const Rule = styled.hr`
  width: 100%;
  margin: 0;
  border: 0;
  height: 1px;
  background: #363636;
`;
const Num = styled.input<{ $al?: string; $bg?: string }>`
  width: 100%;
  height: 13px;
  padding: 0 2px !important;
  border: 1px solid ${c.line} !important;
  background: ${(p) => p.$bg ?? "#343434"} !important;
  color: #ececec !important;
  font-weight: 600 !important;
  line-height: 11px !important;
  text-align: ${(p) => p.$al ?? "right"};
`;
const Wide = styled.button`
  display: flex;
  align-items: center;
  justify-content: center;
  gap: 4px;
  height: 13px;
  border: 1px solid ${c.line} !important;
  background: ${c.on} !important;
  color: #2a1700 !important;
`;
const Pick = styled.select`
  appearance: none;
  width: 100%;
  height: 13px;
  border: 1px solid ${c.line} !important;
  background: #464646 !important;
`;
const PickWrap = styled.label`
  position: relative;
  display: block;
  height: 13px;
  > svg { position: absolute; right: 2px; top: 4px; color: #8a8a8a; pointer-events: none; }
`;
const Signature = styled.div`
  display: grid;
  grid-template-columns: 35px 6px 35px;
  align-items: center;
  height: 13px;
  line-height: 13px;
  text-align: center;
`;

const DropDown = ({ label }: { label: string }) => (
  <PickWrap>
    <Pick aria-label={label}><option /></Pick>
    <S w={6} h={6} fill><path d="M0 0h6L3 6z" /></S>
  </PickWrap>
);

function ClipProps() {
  return (
    <ClipPanel>
      <ClipTitle><ClipSwatch aria-label="Clip activator" />Clip</ClipTitle>
      <Col>
        <Tabs>
          <Tab $on aria-label="Clip"><S w={9} h={10}><path d="M.6.600h7.800v8.800H.6z" /><path d="M3 2.500L6.500 5 3 7.500z" fill="currentColor" stroke="none" /></S></Tab>
          <Tab aria-label="Launch"><S w={11} h={10}><path d="M1 0v10M3 1.500v7M5.500 3v4" /><path d="M7.500 3.200L10.500 5l-3 1.800z" fill="currentColor" stroke="none" /></S></Tab>
        </Tabs>
        <Fields>
          <Pair>
            <Caption><span>Start</span><Pill $w={23} $flat>Set</Pill></Caption>
            <Caption><span>End</span><Pill $w={23} $flat>Set</Pill></Caption>
          </Pair>
          <Pair>
            <Num aria-label="Start" defaultValue="1.       1.       1" />
            <Num aria-label="End" defaultValue="9.       1.       1" $bg={c.panel} />
          </Pair>
          <Rule />
          <Wide><S w={10} h={9}><path d="M2.500 7H.6V1h8.400v6H6" /><path d="M7.500 5L4.500 7l3 2z" fill="currentColor" stroke="none" /></S>Loop</Wide>
          <Pair>
            <Caption><span>Position</span><Pill $w={23} $flat>Set</Pill></Caption>
            <Caption><span>Length</span><Pill $w={23} $flat>Set</Pill></Caption>
          </Pair>
          <Pair>
            <Num aria-label="Loop position" defaultValue="1.       1.       1" />
            <Num aria-label="Loop length" defaultValue="8.       0.       0" />
          </Pair>
          <Rule />
          <Pair>
            <Caption>Signature</Caption>
            <Caption>
              <span>Groove</span>
              <Round aria-label="Hot-swap groove"><S w={9} h={9}><path d="M2 6V4l2-2M7 3v2L5 7M2.500 2H4v1.500M6.500 7H5V5.500" /></S></Round>
              <Round aria-label="Commit groove"><S w={9} h={9}><path d="M1 4.500h6M4.500 2L7 4.500 4.500 7" strokeWidth="1.500" /></S></Round>
            </Caption>
          </Pair>
          <Pair>
            <Signature>
              <Num aria-label="Signature numerator" defaultValue="4" $al="center" />
              <span>/</span>
              <Num aria-label="Signature denominator" defaultValue="4" $al="center" />
            </Signature>
            <Num aria-label="Groove" defaultValue="None" $al="left" $bg="#464646" />
          </Pair>
          <Rule />
          <Pair $cols="37px 42px 69px">
            <Tiny $w={37}>Scale</Tiny>
            <DropDown label="Scale root" />
            <DropDown label="Scale name" />
          </Pair>
        </Fields>
      </Col>
      <Col>
        <Tabs>
          <Tab $on aria-label="Notes"><S w={10} h={11} fill><path d="M2.500 1h7v7a1.700 1.500 0 1 1-1.200-1.400V3H4v6a1.700 1.500 0 1 1-1.300-1.400z" /></S></Tab>
          <Tab aria-label="Envelopes"><S w={11} h={10}><path d="M2 8l7-6" /><circle cx="2" cy="8" r="1.300" fill="currentColor" /><circle cx="9" cy="2" r="1.300" fill="currentColor" /></S></Tab>
          <Tab aria-label="Expression"><S w={11} h={10}><path d="M2 2l3 5 4-5" /><circle cx="2" cy="2" r="1" fill="currentColor" /><circle cx="9" cy="2" r="1" fill="currentColor" /><circle cx="5.500" cy="8" r="1.300" fill="currentColor" /></S></Tab>
        </Tabs>
        <Fields>
          <Caption>Notes</Caption>
          <Num aria-label="Note range" defaultValue="C♯0 - A♯0" $al="center" />
          <Rule />
          <Pair><Pill>÷2</Pill><Pill>×2</Pill></Pair>
          <Pair><Pill>Reverse</Pill><Pill>Invert</Pill></Pair>
          <Pair><Pill>Legato</Pill><Pill>Duplicate</Pill></Pair>
          <Rule />
          <Pair><Pill>Randomize</Pill><Num aria-label="Randomize amount" defaultValue="127" $al="center" $bg={c.teal} /></Pair>
          <Rule />
          <Pair><Caption>Velocity Range</Caption><Num aria-label="Velocity range" defaultValue="0" $al="center" /></Pair>
        </Fields>
      </Col>
    </ClipPanel>
  );
}

/* ---------- note editor ---------- */

const Editor = styled.div`
  display: grid;
  grid-template-columns: 17px 82px minmax(0, 1fr);
  grid-template-rows: 57px 77px 4px 50px;
`;
const EdCorner = styled.div`
  grid-column: 1 / 3;
  display: flex;
  align-items: flex-end;
  gap: 2px;
  padding: 0 2px 3px;
  background: linear-gradient(#646464 17px, ${c.panel} 17px);
`;
const EdHead = styled.div`
  position: relative;
  background: linear-gradient(#0b0b0b 1px, ${c.lime} 1px 10px, #0b0b0b 10px) 0 17px / 100% 11px no-repeat,
    repeating-linear-gradient(90deg, rgba(0, 0, 0, 0.1) 0 12.5%, transparent 12.5% 25%),
    linear-gradient(#686868 28px, #515151 28px 39px, #333 39px 40px, #404040 40px 56px, #222 56px);
  overflow: hidden;
`;
const FlagLayer = styled.svg`
  position: absolute;
  top: 18px;
  z-index: 2;
`;
const FlagL = styled(FlagLayer)` left: 0; `;
const FlagR = styled(FlagLayer)` right: 0; `;
const EdNumber = styled.span<{ $i: number }>`
  position: absolute;
  top: 5px;
  left: ${(p) => p.$i * 12.5}%;
  padding-left: 4px;
  color: #eee;
  font-weight: 600;
`;
const IconCol = styled.div`
  grid-column: 1;
  grid-row: 2 / 5;
  display: flex;
  flex-direction: column;
  align-items: center;
  padding: 2px 0;
  gap: 5px;
  background: ${c.panel};
  border-right: 1px solid #333;
  > :nth-child(2) { margin-top: auto !important; }
`;
const Keys = styled.div`
  grid-column: 2;
  background: ${c.panel};
  overflow: hidden;
`;
const KeyRow = styled.div`
  height: 24px;
  padding-left: 3px;
  line-height: 22px;
  font-weight: 600;
  border-bottom: 1px solid #2d2d2d;
  background: linear-gradient(90deg, transparent calc(100% - 26px), #000 calc(100% - 26px));
`;
const Stage = styled.div<{ $dark: string; $light: string }>`
  position: relative;
  overflow: hidden;
  background: repeating-linear-gradient(90deg, ${(p) => p.$dark} 0 12.5%, ${(p) => p.$light} 12.5% 25%);
  > svg { position: absolute; inset: 0; width: 100%; height: 100%; }
`;
const Note = styled.button<{ $a: number; $b: number; $k: number }>`
  position: absolute;
  top: ${(p) => p.$k * 24}px;
  left: ${(p) => p.$a * 12.5}%;
  width: ${(p) => (p.$b - p.$a) * 12.5}%;
  height: 23px;
  padding: 0 3px !important;
  text-align: left;
  background: ${c.note} !important;
  border: 1px solid #37501a !important;
  color: #1d2a00 !important;
`;
const Split = styled.div`
  grid-column: 2 / -1;
  background: #353535;
`;
const LaneLabels = styled.div`
  grid-column: 2;
  display: grid;
  grid-template-rows: 31px 19px;
  font-weight: 600;
  line-height: 16px;
`;
const LaneLabel = styled.div`
  display: flex;
  justify-content: space-between;
  padding: 0 0 0 4px;
  overflow: hidden;
  border-bottom: 1px solid #333;
  background: #606060;
`;
const Scaled = styled.span`
  display: flex;
  align-items: flex-start;
  gap: 1px;
`;
const Corner14 = styled(Zoom)`
  color: rgba(20, 50, 64, 0.75);
`;
const quarter = Array.from({ length: 31 }, (_, i) => `${((i + 1) / 32) * 100}%`);

function NoteEditor() {
  const names = ["A♯0", "F♯0", "D♯0"];
  return (
    <Editor>
      <EdCorner>
        <Tiny $w={46} $on>Fold</Tiny>
        <Tiny $w={47} $dim>Scale</Tiny>
      </EdCorner>
      <EdHead>
        {Array.from({ length: 8 }, (_, i) => <EdNumber key={i} $i={i}>{i + 1}</EdNumber>)}
        <svg width="100%" height="57">
          <line x1="0" x2="0" y1="11" y2="17" stroke="#bbb" strokeWidth="2" />
          {quarter.map((x, i) => (
            <g key={x} shapeRendering="crispEdges">
              <line x1={x} x2={x} y1={i % 4 === 3 ? 11 : 15} y2="17" stroke="#bbb" />
              <line x1={x} x2={x} y1="29" y2="57" stroke="rgba(0,0,0,.35)" />
            </g>
          ))}
        </svg>
        <FlagL width="10" height="38" fill="#5a5a5a" stroke="#111"><path d="M.5 0l7.500 4.500L.5 9zM.5 11l7.500 5-7.500 5zM0 23h3.500v8L0 35z" /></FlagL>
        <FlagR width="10" height="38" fill="#5a5a5a" stroke="#111"><path d="M9.500 0L2 4.500 9.500 9zM9.500 11L2 16l7.500 5z" /></FlagR>
      </EdHead>
      <IconCol>
        <Phones />
        <Round $bg={c.on} aria-label="Velocity lane"><S w={9} h={9}><path d="M2 4.500h6" stroke="#2a1700" /><circle cx="3" cy="4.500" r="1.300" fill="#2a1700" stroke="none" /></S></Round>
        <Round $bg={c.on} aria-label="Chance lane"><S w={9} h={9} fill><g fill="#2a1700"><circle cx="2.500" cy="4.500" r="1.300" /><path d="M5 4h1v1H5zM7 4h1v1H7z" /></g></S></Round>
        <Round aria-label="Show lanes"><S w={8} h={8} fill><path d="M2 0l5 4-5 4z" fill="#eee" /></S></Round>
      </IconCol>
      <Keys>{names.map((n) => <KeyRow key={n}>{n}</KeyRow>)}<KeyRow /></Keys>
      <Stage $dark="#58727f" $light="#63828f">
        <svg><Lines xs={quarter} /></svg>
        {editorNotes.map(([a, b, k]) => <Note key={a} $a={a} $b={b} $k={k} aria-label={`Note at ${a + 1}`}>{names[k]}</Note>)}
      </Stage>
      <Split />
      <LaneLabels>
        <LaneLabel><span>Velocity</span><Scaled><span>100</span><S w={6} h={30} sw={1}><path d="M0 8.500h3M2 3.500h3.500v24H1M3 15.500h2.500" stroke="#ddd" /></S></Scaled></LaneLabel>
        <LaneLabel><span>Chance</span><Scaled><span>100%</span><S w={6} h={18} sw={1}><path d="M0 4.500h5.500V18M3 15.500h2.500" stroke="#ddd" /></S></Scaled></LaneLabel>
      </LaneLabels>
      <Stage $dark="#63808d" $light="#6b8f9d">
        <svg>
          <Lines xs={quarter} />
          <line x1="0" x2="100%" y1="8.500" y2="8.500" stroke="#14242b" />
          <line x1="0" x2="100%" y1="31.500" y2="31.500" stroke="#3f535c" />
          <line x1="0" x2="100%" y1="35.500" y2="35.500" stroke="#14242b" strokeDasharray="2 1" />
          {editorNotes.map(([a]) => [8.5, 35.5].map((y) => (
            <circle key={`${a}-${y}`} cx={`${a * 12.5 + 0.25}%`} cy={y} r="3" fill={c.lime} stroke="#223300" />
          )))}
        </svg>
        <Corner14>1/4</Corner14>
      </Stage>
    </Editor>
  );
}

/* ---------- status bar ---------- */

const Status = styled.footer`
  display: flex;
  align-items: center;
  height: 24px;
  margin-top: 8px;
  padding: 0 8px;
  gap: 10px;
`;
const StatusText = styled.div`
  flex: 1;
  height: 20px;
  border: 2px solid ${c.well};
  border-radius: 3px;
  background: ${c.panel};
`;
const MiniClip = styled.div`
  width: 202px;
  height: 22px;
  padding: 1px;
  background: ${c.well};
`;
const DeviceChain = styled.div`
  display: flex;
  align-items: center;
  gap: 3px;
  height: 20px;
  margin-left: 2px;
  padding: 0 0 0 3px;
  background: #333;
  color: #fff;
  font-weight: 600;
`;

function StatusBar() {
  const tri = <S w={10} h={11} fill><path d="M5 0l5 11H0z" fill="#6a6a6a" /></S>;
  return (
    <Status>
      <Round $s={18} $bg="#2f2f2f" aria-label="Toggle info view">{tri}</Round>
      <StatusText />
      <MiniClip>
        <svg width="200" height="20" viewBox="0 0 200 20">
          <rect width="200" height="20" fill={c.steel} />
          {editorNotes.map(([a, b, k]) => <rect key={a} x={3 + a * 24.5} y={[6, 10, 13, 15][k]} width={(b - a) * 24.5} height="1" fill="#0c1a20" />)}
          <rect x="1" y="1" width="192" height="18" fill="none" stroke="#b4b4b4" strokeWidth="2" />
        </svg>
      </MiniClip>
      <DeviceChain>
        Bass Sub
        <svg width="100" height="16" viewBox="0 0 100 16">
          <rect width="100" height="16" fill="#3a3a3a" />
          <path d="M0 2h18M0 5h16M0 8h18M0 11h15M0 14h18" stroke="#777" />
          <rect x="20" width="23" height="16" fill="#0c0c0c" />
          <path d="M46 2h16M46 5h14M46 8h16M46 11h12M46 14h15M66 5h16M66 8h14M66 11h16M66 14h14" stroke="#6a6a6a" strokeDasharray="3 1" />
          <path d="M65 2h8" stroke="#c0702a" strokeWidth="2" />
          <rect x="84" y="2" width="11" height="12" fill="#0c0c0c" />
          <path d="M98 1v14" stroke="#888" strokeWidth="2" />
        </svg>
      </DeviceChain>
      <Round $s={18} $bg="#2f2f2f" aria-label="Toggle detail view">{tri}</Round>
    </Status>
  );
}

export default function App() {
  return (
    <Page>
      <Global />
      <TitleBar>
        <AppBadge>Live</AppBadge>
        <span>Untitled* - Ableton Live 11 Suite</span>
        <WindowButtons>
          <WinButton aria-label="Minimize"><S sw={1}><path d="M1 6.500h10" /></S></WinButton>
          <WinButton aria-label="Restore"><S sw={1}><path d="M1.500 3.500h7v7h-7zM4 3.500V1.500h6.500v7h-2" /></S></WinButton>
          <WinButton aria-label="Close"><S sw={1}><path d="M1 1l10 10M11 1L1 11" /></S></WinButton>
        </WindowButtons>
      </TitleBar>
      <MenuBar>
        {["File", "Edit", "Create", "View", "Options", "Help"].map((m) => (
          <MenuSlot key={m}>
            <MenuTitle aria-haspopup="menu">{m}</MenuTitle>
            {m === "View" && <ViewMenu />}
          </MenuSlot>
        ))}
      </MenuBar>
      <TransportBar />
      <Workspace>
        <BrowserPane />
        <Arrangement />
        <RightRail />
      </Workspace>
      <Detail>
        <InfoBox />
        <ClipWell>
          <ClipProps />
          <NoteEditor />
        </ClipWell>
      </Detail>
      <StatusBar />
    </Page>
  );
}
